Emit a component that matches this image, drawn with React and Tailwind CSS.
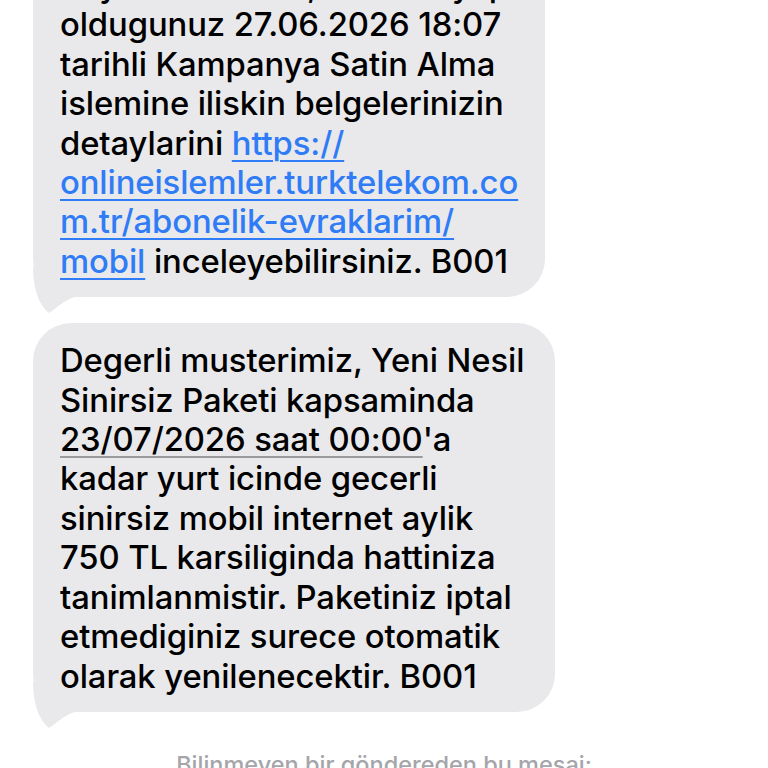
const font = { fontFamily: 'Inter, "Noto Sans", "Liberation Sans", sans-serif' }

function Tail() {
  return (
    <svg
      className="absolute left-0 bottom-[-16px] w-[50px] h-[46px]"
      viewBox="0 0 50 46"
    >
      <path d="M0 0 C0 22 6 38 16 46 C24 41 31 33 42 30 L42 0 Z" fill="#e9e9eb" />
    </svg>
  )
}

function Bubble({ className = '', children }) {
  return (
    <div className={`relative ml-[33px] bg-[#e9e9eb] rounded-[38px] pl-[27px] pt-[18px] pb-[16px] ${className}`}>
      <div className="relative z-10 text-[32.8px] leading-[39.4px] font-medium text-black whitespace-nowrap tracking-[-0.1px]">
        {children}
      </div>
      <Tail />
    </div>
  )
}

const Link = ({ children }) => (
  <span className="text-[#2f7cf6] underline decoration-[2px] underline-offset-[5px]">{children}</span>
)

export default function App() {
  return (
    <div className="h-[768px] w-[768px] overflow-hidden bg-white" style={font}>
      <div className="mt-[-52px] flex flex-col">
        <Bubble className="w-[512px]">
          Sayin abonemiz, islemini yapmis
          <br />
          oldugunuz 27.06.2026 18:07
          <br />
          tarihli Kampanya Satin Alma
          <br />
          islemine iliskin belgelerinizin
          <br />
          detaylarini <Link>https://</Link>
          <br />
          <Link>onlineislemler.turktelekom.co</Link>
          <br />
          <Link>m.tr/abonelik-evraklarim/</Link>
          <br />
          <Link>mobil</Link> inceleyebilirsiniz. B001
        </Bubble>

        <Bubble className="w-[522px] mt-[26px]">
          Degerli musterimiz, Yeni Nesil
          <br />
          Sinirsiz Paketi kapsaminda
          <br />
          <span className="underline decoration-[#9a9a9e] decoration-[2px] underline-offset-[5px]">
            23/07/2026 saat 00:00
          </span>
          'a
          <br />
          kadar yurt icinde gecerli
          <br />
          sinirsiz mobil internet aylik
          <br />
          750 TL karsiliginda hattiniza
          <br />
          tanimlanmistir. Paketiniz iptal
          <br />
          etmediginiz surece otomatik
          <br />
          olarak yenilenecektir. B001
        </Bubble>

        <div className="mt-[38px] text-center text-[23.5px] leading-[30px] text-[#a5a5aa] font-medium whitespace-nowrap">
          Bilinmeyen bir göndereden bu mesaj:
        </div>
      </div>
    </div>
  )
}
